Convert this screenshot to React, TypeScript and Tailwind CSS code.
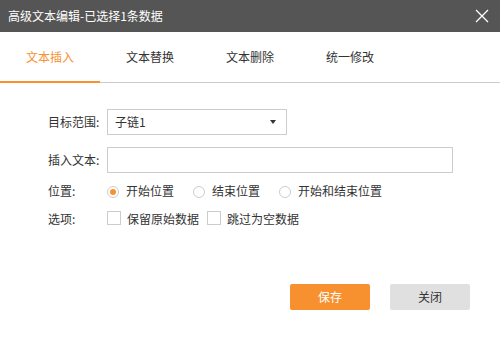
import React from "react";

const font = { fontFamily: '"Noto Sans CJK SC", "Noto Sans", sans-serif' };

export default function App() {
  const tabs = ["文本插入", "文本替换", "文本删除", "统一修改"];
  return (
    <div className="w-[500px] h-[340px] bg-white text-[12px] text-[#333] overflow-hidden" style={font}>
      <div className="h-[32px] bg-[#555555] flex items-center justify-between pl-[8px] pr-[10px]">
        <span className="text-white text-[12px] leading-none">高级文本编辑-已选择1条数据</span>
        <svg width="14" height="14" viewBox="0 0 14 14" className="mr-[1px]">
          <path d="M1 1 L13 13 M13 1 L1 13" stroke="#fff" strokeWidth="1.3" />
        </svg>
      </div>
      <div className="flex h-[51px] border-b border-[#cccccc]">
        {tabs.map((t, i) => (
          <div
            key={t}
            className={
              i === 0
                ? "w-[100px] flex items-center justify-center text-[#f7902f] border-b-2 border-[#f7902f] mb-[-1px] text-[12px]"
                : "w-[100px] flex items-center justify-center text-[#333] text-[12px]"
            }
          >
            {t}
          </div>
        ))}
      </div>
      <div className="pl-[48px] pt-[26px]">
        <div className="flex items-center h-[26px]">
          <span className="w-[59px]">目标范围:</span>
          <div className="w-[180px] h-[26px] border border-[#cccccc] flex items-center justify-between pl-[7px] pr-[10px]">
            <span>子链1</span>
            <svg width="6" height="4" viewBox="0 0 6 4">
              <path d="M0 0 L6 0 L3 4 Z" fill="#333" />
            </svg>
          </div>
        </div>
        <div className="flex items-center h-[26px] mt-[12px]">
          <span className="w-[59px]">插入文本:</span>
          <div className="w-[346px] h-[26px] border border-[#cccccc]" />
        </div>
        <div className="flex items-center h-[20px] mt-[8px]">
          <span className="w-[59px]">位置:</span>
          <div className="flex items-center">
            <span className="w-[12px] h-[12px] rounded-full border border-[#cccccc] flex items-center justify-center translate-y-[1px]">
              <span className="w-[6px] h-[6px] rounded-full bg-[#f7902f]" />
            </span>
            <span className="ml-[7px]">开始位置</span>
          </div>
          <div className="flex items-center ml-[19px]">
            <span className="w-[12px] h-[12px] rounded-full border border-[#cccccc] translate-y-[1px]" />
            <span className="ml-[7px]">结束位置</span>
          </div>
          <div className="flex items-center ml-[19px]">
            <span className="w-[12px] h-[12px] rounded-full border border-[#cccccc] translate-y-[1px]" />
            <span className="ml-[7px]">开始和结束位置</span>
          </div>
        </div>
        <div className="flex items-center h-[20px] mt-[8px]">
          <span className="w-[59px]">选项:</span>
          <div className="flex items-center">
            <span className="w-[14px] h-[14px] border border-[#cccccc] -translate-y-[1px]" />
            <span className="ml-[6px]">保留原始数据</span>
          </div>
          <div className="flex items-center ml-[8px]">
            <span className="w-[14px] h-[14px] border border-[#cccccc] -translate-y-[1px]" />
            <span className="ml-[6px]">跳过为空数据</span>
          </div>
        </div>
      </div>
      <div className="flex justify-end gap-[20px] pr-[30px] mt-[55px]">
        <button className="w-[80px] h-[26px] rounded-[2px] bg-[#f7902f] text-white text-[12px]">保存</button>
        <button className="w-[80px] h-[26px] rounded-[2px] bg-[#e0e0e0] text-[#333] text-[12px]">关闭</button>
      </div>
    </div>
  );
}
